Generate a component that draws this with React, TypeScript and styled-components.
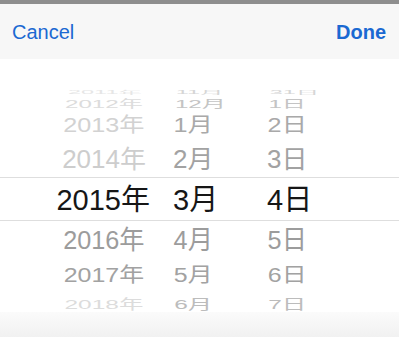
import styled, { createGlobalStyle } from "styled-components";

const GlobalStyle = createGlobalStyle`
  html, body {
    margin: 0;
    padding: 0;
    background: #ffffff;
  }
  body {
    font-family: "Liberation Sans", "Noto Sans CJK JP", Arial, sans-serif;
    -webkit-font-smoothing: antialiased;
  }
`;

type WheelRow = {
  year: string;
  month: string;
  day: string;
  height: number;
  sx: number;
  sy: number;
  yearColor: string;
  color: string;
};

const rows: WheelRow[] = [
  { year: "2011年", month: "11月", day: "31日", height: 12, sx: 0.9, sy: 0.18, yearColor: "#e6e6e6", color: "#d6d6d6" },
  { year: "2012年", month: "12月", day: "1日", height: 17, sx: 0.93, sy: 0.45, yearColor: "#dcdcdc", color: "#c4c4c4" },
  { year: "2013年", month: "1月", day: "2日", height: 33, sx: 0.97, sy: 0.8, yearColor: "#d2d2d2", color: "#a9a9a9" },
  { year: "2014年", month: "2月", day: "3日", height: 36, sx: 1, sy: 0.96, yearColor: "#cdcdcd", color: "#a2a2a2" },
];

const rowsBelow: WheelRow[] = [
  { year: "2016年", month: "4月", day: "5日", height: 37, sx: 0.97, sy: 1, yearColor: "#9c9c9c", color: "#9c9c9c" },
  { year: "2017年", month: "5月", day: "6日", height: 33, sx: 0.96, sy: 0.8, yearColor: "#a2a2a2", color: "#a2a2a2" },
  { year: "2018年", month: "6月", day: "7日", height: 14, sx: 0.94, sy: 0.52, yearColor: "#dcdcdc", color: "#bcbcbc" },
];

export default function App() {
  const renderRow = (r: WheelRow) => (
    <Row key={r.year} $height={r.height}>
      <YearCell $sx={r.sx} $sy={r.sy} $color={r.yearColor}>
        {r.year}
      </YearCell>
      <Cell $sx={r.sx} $sy={r.sy} $color={r.color}>
        {r.month}
      </Cell>
      <Cell $sx={r.sx} $sy={r.sy} $color={r.color}>
        {r.day}
      </Cell>
    </Row>
  );

  return (
    <>
      <GlobalStyle />
      <Screen>
        <StatusStrip />
        <Toolbar>
          <ToolbarButton>Cancel</ToolbarButton>
          <ToolbarButton $bold>Done</ToolbarButton>
        </Toolbar>
        <Wheel>
          {rows.map(renderRow)}
          <SelectedRow>
            <SelectedYear>2015年</SelectedYear>
            <SelectedCell>3月</SelectedCell>
            <SelectedCell>4日</SelectedCell>
          </SelectedRow>
          {rowsBelow.map(renderRow)}
        </Wheel>
        <Footer />
      </Screen>
    </>
  );
}

const Screen = styled.div`
  width: 399px;
  height: 337px;
  display: flex;
  flex-direction: column;
  overflow: hidden;
  background: #ffffff;
`;

const StatusStrip = styled.div`
  height: 4px;
  background: #8e8e8e;
  flex-shrink: 0;
`;

const Toolbar = styled.div`
  height: 55px;
  flex-shrink: 0;
  display: flex;
  align-items: center;
  justify-content: space-between;
  padding: 0 13px 0 12px;
  background: #f7f7f7;
`;

const ToolbarButton = styled.span<{ $bold?: boolean }>`
  font-size: 20px;
  font-weight: ${(p) => (p.$bold ? 700 : 400)};
  color: #1b69d2;
  margin-top: 2px;
`;

const Wheel = styled.div`
  height: 253px;
  flex-shrink: 0;
  display: flex;
  flex-direction: column;
  justify-content: flex-start;
  padding-top: 20px;
  box-sizing: border-box;
`;

const Row = styled.div<{ $height: number }>`
  height: ${(p) => p.$height}px;
  flex-shrink: 0;
  display: grid;
  grid-template-columns: 173px 94px 1fr;
  align-items: center;
  font-size: 26px;
  line-height: 1;
`;

const Cell = styled.span<{ $sx: number; $sy: number; $color: string }>`
  justify-self: start;
  white-space: nowrap;
  color: ${(p) => p.$color};
  transform: scale(${(p) => p.$sx}, ${(p) => p.$sy});
  transform-origin: center center;
`;

const YearCell = styled(Cell)`
  justify-self: end;
  margin-right: 27px;
`;

const SelectedRow = styled.div`
  height: 44px;
  flex-shrink: 0;
  box-sizing: border-box;
  display: grid;
  grid-template-columns: 173px 94px 1fr;
  align-items: center;
  border-top: 1px solid #dedede;
  border-bottom: 1px solid #dedede;
  font-size: 29px;
  line-height: 1;
  color: #161616;
  padding-top: 3px;
`;

const SelectedCell = styled.span`
  white-space: nowrap;
`;

const SelectedYear = styled.span`
  justify-self: end;
  margin-right: 23px;
  white-space: nowrap;
`;

const Footer = styled.div`
  flex: 1;
  background: linear-gradient(#fbfbfb, #f1f1f1);
`;
